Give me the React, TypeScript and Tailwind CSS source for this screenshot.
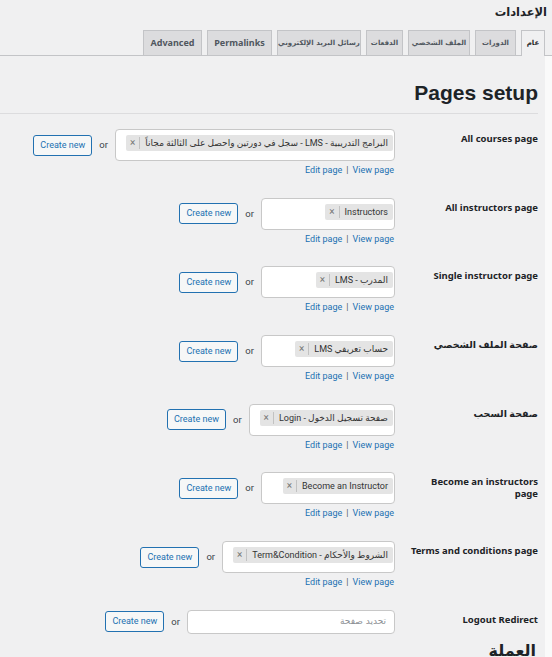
import React from "react";

const latin = { fontFamily: '"Noto Sans", "DejaVu Sans", sans-serif' };
const reg = { fontFamily: 'Roboto, "DejaVu Sans", sans-serif' };

type Row = {
  label: React.ReactNode;
  value?: string;
};

const rows: Row[] = [
  { label: "All courses page", value: "البرامج التدريبية - LMS - سجل في دورتين واحصل على الثالثة مجاناً" },
  { label: "All instructors page", value: "Instructors" },
  { label: "Single instructor page", value: "المدرب - LMS" },
  { label: "صفحة الملف الشخصي", value: "حساب تعريفي LMS" },
  { label: "صفحة السحب", value: "صفحة تسجيل الدخول - Login" },
  {
    label: (
      <>
        Become an instructors
        <br />
        page
      </>
    ),
    value: "Become an Instructor",
  },
  { label: "Terms and conditions page", value: "الشروط والأحكام - Term&Condition" },
];

const tabs = [
  { t: "عام", w: "w-[24px]", active: true },
  { t: "الدورات", w: "w-[41px]" },
  { t: "الملف الشخصي", w: "w-[62px]" },
  { t: "الدفعات", w: "w-[37px]" },
  { t: "رسائل البريد الإلكتروني", w: "w-[84px]" },
  { t: "Permalinks", w: "w-[65px]" },
  { t: "Advanced", w: "w-[59px]" },
];

function CreateBtn() {
  return (
    <button
      className="h-[21px] w-[59px] shrink-0 rounded-[3px] border border-[#2271b1] bg-[#f6f7f7] text-[9px] leading-[19px] text-[#2271b1]"
      style={reg}
    >
      Create new
    </button>
  );
}

function Chip({ text }: { text: string }) {
  return (
    <span className="flex h-[16px] items-center rounded-[2px] bg-[#e4e4e4] text-[9px] leading-[16px] text-[#333]" style={reg}>
      <span className="whitespace-nowrap pl-[5px] pr-[5px]">{text}</span>
      <span className="h-[12px] w-px bg-[#c2c2c2]" />
      <span className="px-[4px] text-[10px] text-[#777]">×</span>
    </span>
  );
}

function Label({ children }: { children: React.ReactNode }) {
  return (
    <div className="w-[143px] shrink-0 pt-[4px] text-[9.5px] font-bold leading-[12px] text-[#1d2327]" style={latin}>
      {children}
    </div>
  );
}

function FieldRow({ row }: { row: Row }) {
  return (
    <div className="flex pb-[21.7px]">
      <Label>{row.label}</Label>
      <div className="flex flex-col items-start">
        <div className="flex items-center gap-[7px]">
          <div className="flex h-[32px] min-w-[134px] items-start rounded-[4px] border border-[#c8c8c8] bg-white pl-[10px] pr-[1px] pt-[5px]">
            <Chip text={row.value || ""} />
          </div>
          <span className="text-[9.5px] text-[#3c434a]" style={reg}>
            or
          </span>
          <CreateBtn />
        </div>
        <div dir="ltr" className="mt-[3px] pr-[1px] text-[9px] leading-[12px]" style={reg}>
          <span className="text-[#2271b1]">Edit page</span>
          <span className="px-[4px] text-[#50575e]">|</span>
          <span className="text-[#2271b1]">View page</span>
        </div>
      </div>
    </div>
  );
}

export default function App() {
  return (
    <div
      dir="rtl"
      className="flex h-[657px] w-[552px] flex-col overflow-hidden bg-[#f0f0f1] text-[#1d2327]"
      style={{ fontFamily: '"DejaVu Sans", sans-serif' }}
    >
      <h1 className="pr-[5px] pt-[2px] text-[11.5px] font-semibold leading-[20px] text-[#1d2327]">الإعدادات</h1>
      <nav className="mt-[8px] flex h-[26px] items-end gap-[5px] border-b border-[#c3c4c7] pr-[7px]">
        {tabs.map((tab) => (
          <span
            key={tab.t}
            className={
              tab.active
                ? "mb-[-1px] flex h-[26px] items-center justify-center whitespace-nowrap border border-b-0 border-[#c3c4c7] bg-[#f0f0f1] text-[7px] font-bold text-[#1d2327] " + tab.w
                : "flex h-[25px] items-center justify-center whitespace-nowrap border border-b-0 border-[#c3c4c7] bg-[#dcdcde] text-[7px] font-bold text-[#50575e] " + tab.w
            }
            style={/[A-Za-z]/.test(tab.t) ? { ...latin, fontSize: "9px" } : undefined}
          >
            {tab.t}
          </span>
        ))}
      </nav>
      <div className="flex min-h-0 flex-1">
        <div className="w-[7px] shrink-0 bg-[#fafafa]" />
        <main className="flex-1 pr-[7px]">
          <h2
            dir="ltr"
            className="mt-[24px] text-right text-[21px] font-bold leading-[25px] text-[#1d2327]"
            style={{ fontFamily: '"Liberation Sans", Arial, sans-serif' }}
          >
            Pages setup
          </h2>
          <div className="mt-[8px] h-px bg-[#dcdcde]" />
          <div className="mt-[15px]">
            {rows.map((r, i) => (
              <FieldRow key={i} row={r} />
            ))}
            <div className="flex">
              <Label>Logout Redirect</Label>
              <div className="flex items-center gap-[7px]">
                <div className="flex h-[24px] w-[208px] items-center rounded-[4px] border border-[#c8c8c8] bg-white pr-[8px] text-[9px] text-[#8c8f94]">
                  تحديد صفحة
                </div>
                <span className="text-[9.5px] text-[#3c434a]" style={reg}>
                  or
                </span>
                <CreateBtn />
              </div>
            </div>
            <h2 className="mt-[4px] pr-[2px] text-[16px] font-bold leading-[26px] text-[#1d2327]">العملة</h2>
          </div>
        </main>
      </div>
    </div>
  );
}
